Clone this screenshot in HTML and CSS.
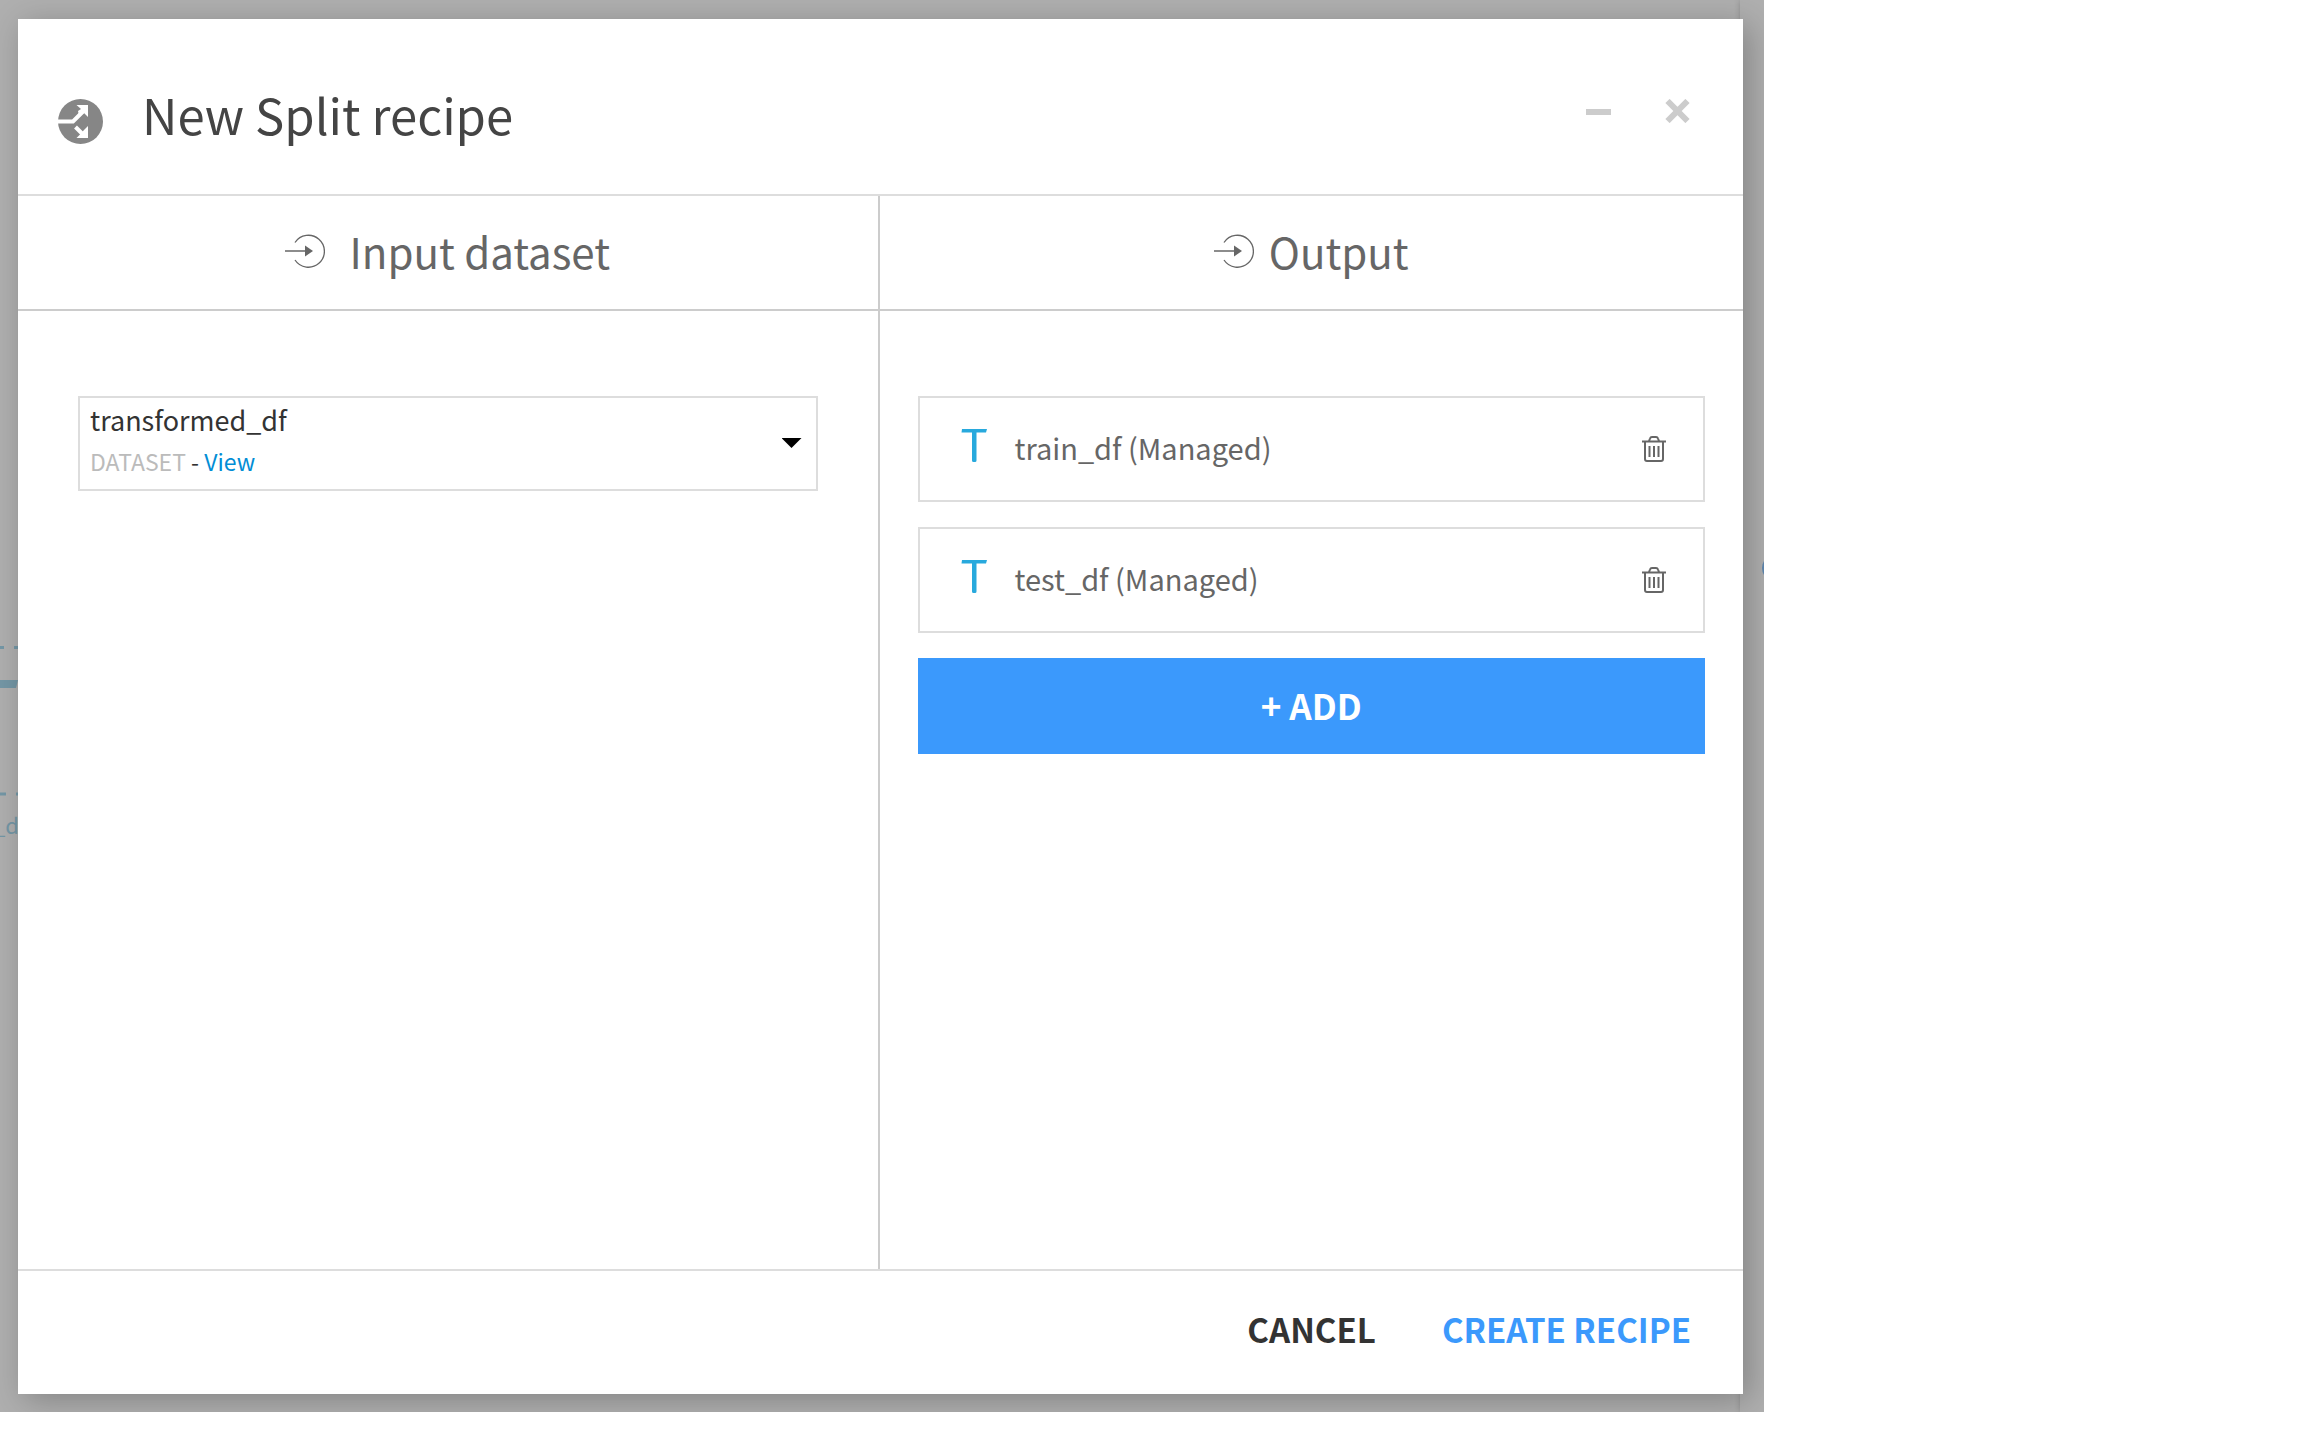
FILE: index.html
```html
<!DOCTYPE html>
<html lang="en">
<head>
<meta charset="utf-8">
<meta name="viewport" content="width=device-width, initial-scale=1">
<title>New Split recipe</title>
<link rel="stylesheet" href="styles.css">
</head>
<body>
<svg class="sprite" aria-hidden="true">
  <symbol id="io" viewBox="0 0 40 34">
    <path d="M10 8.500A16 16 0 1 1 10 26" fill="none" stroke="currentColor" stroke-width="1.300"/>
    <path d="M0 17h21" stroke="currentColor" stroke-width="1.500"/>
    <path d="M20 11.500l8 5.500-8 5.500z" fill="currentColor"/>
  </symbol>
  <symbol id="tee" viewBox="0 0 26 34">
    <path d="M1 0h25l-1 3.500h-9.500v28q0 1.500-1.500 1.500h-1.500q-1.500 0-1.500-1.500v-28H.500z" fill="currentColor"/>
  </symbol>
  <symbol id="trash" viewBox="0 0 24 26">
    <path d="M0 5.500h24M7 5l1-2.500q.500-1.500 2-1.500h4q1.500 0 2 1.500L17 5M3 5.500V23q0 2 2 2h14q2 0 2-2V5.500M7.500 10v11M12 10v11M16.500 10v11" fill="none" stroke="currentColor" stroke-width="2"/>
  </symbol>
</svg>
<div class="backdrop">
  <div class="flow" aria-hidden="true">
    <svg class="flow-links" viewBox="0 0 18 160">
      <path d="M0 1.500h4M14 1.500h4M0 148h6M16 148h2" stroke="#7497a6" stroke-width="3" fill="none"/>
      <path d="M0 34h18l-2 8H0z" fill="#7497a6"/>
    </svg>
    <span class="flow-label">_d</span>
    <span class="flow-node"></span>
    <span class="flow-panel"></span>
  </div>
  <section class="modal" role="dialog" aria-labelledby="title">
    <header class="modal-head">
      <svg class="split-icon" viewBox="0 0 45 45" aria-hidden="true">
        <circle cx="22.500" cy="22.500" r="22.500" fill="#868686"/>
        <path d="M0 22.500h15L25.500 12" fill="none" stroke="#fff" stroke-width="4"/>
        <path d="M18.500 6H30v12l-4-4-5 2.500-1-4.500 3-2z" fill="#fff"/>
        <path d="M17.500 28l7 7" stroke="#fff" stroke-width="4"/>
        <path d="M30 27v12H18.500l4-4 3.500-4z" fill="#fff"/>
      </svg>
      <h1 id="title">New Split recipe</h1>
      <div class="window-actions">
        <button type="button" aria-label="Minimize"><svg viewBox="0 0 25 24"><path d="M0 13h25" stroke="currentColor" stroke-width="6"/></svg></button>
        <button type="button" aria-label="Close"><svg viewBox="0 0 25 24"><path d="M2.500 2l20 20M22.500 2l-20 20" stroke="currentColor" stroke-width="6"/></svg></button>
      </div>
    </header>
    <div class="columns">
      <section class="column">
        <h2 class="wide"><svg class="io" aria-hidden="true"><use href="#io"/></svg>Input dataset</h2>
        <div class="input-body">
          <div class="picker">
            <select aria-label="Input dataset"><option>transformed_df</option></select>
            <p class="picker-note"><span>DATASET</span> - <a href="#view">View</a></p>
            <i class="caret"></i>
          </div>
        </div>
      </section>
      <section class="column">
        <h2><svg class="io" aria-hidden="true"><use href="#io"/></svg>Output</h2>
        <div class="output-body">
          <div class="output">
            <svg class="tee" aria-hidden="true"><use href="#tee"/></svg>
            <span class="output-name">train_df (Managed)</span>
            <button type="button" aria-label="Delete train_df"><svg class="trash"><use href="#trash"/></svg></button>
          </div>
          <div class="output">
            <svg class="tee" aria-hidden="true"><use href="#tee"/></svg>
            <span class="output-name">test_df (Managed)</span>
            <button type="button" aria-label="Delete test_df"><svg class="trash"><use href="#trash"/></svg></button>
          </div>
          <button type="button" class="add">+ ADD</button>
        </div>
      </section>
    </div>
    <footer class="modal-foot">
      <button type="button">CANCEL</button>
      <button type="button" class="primary">CREATE RECIPE</button>
    </footer>
  </section>
</div>
</body>
</html>
```
FILE: styles.css
```css
* { box-sizing: border-box; }
body {
  margin: 0;
  background: #fff;
  color: #333;
  font-family: "Noto Sans CJK SC", "Noto Sans", sans-serif;
}
h1, h2, p { margin: 0; font-weight: 400; }
button {
  border: 0;
  padding: 0;
  background: none;
  color: inherit;
  font: inherit;
  cursor: pointer;
}
svg { display: block; flex: none; }
.sprite { position: absolute; width: 0; height: 0; }

.backdrop {
  position: relative;
  display: flex;
  width: 76.5625%;
  min-height: calc(100vh - 28px);
  padding: 19px 21px 18px 18px;
  background: #afafaf;
  overflow: hidden;
}
.flow-links { position: absolute; left: 0; top: 646px; width: 18px; height: 160px; }
.flow-label {
  position: absolute;
  left: -7px;
  top: 808px;
  font-size: 22px;
  line-height: 32px;
  color: #7497a6;
}
.flow-node {
  position: absolute;
  right: -24px;
  top: 555px;
  width: 26px;
  height: 26px;
  border-radius: 50%;
  background: #5f87b0;
}
.flow-panel {
  position: absolute;
  right: 0;
  top: 0;
  bottom: 0;
  width: 24px;
  box-shadow: 0 0 6px rgba(0, 0, 0, .2);
}

.modal {
  position: relative;
  display: flex;
  flex: 1;
  flex-direction: column;
  background: #fff;
  box-shadow: 6px 6px 30px rgba(0, 0, 0, .25);
}
.modal-head {
  display: flex;
  align-items: center;
  height: 177px;
  padding: 14px 53px 0 40px;
  border-bottom: 2px solid #ddd;
}
.split-icon { width: 45px; height: 45px; margin-top: 16px; }
h1 { margin-left: 39px; font-size: 49px; line-height: 72px; color: #444; }
.window-actions { display: flex; gap: 54px; margin-left: auto; color: #ccc; }
.window-actions svg { width: 25px; height: 24px; margin-bottom: 6px; }

.columns { display: grid; flex: 1; grid-template-columns: calc(50% - 3px) 1fr; }
.column + .column { border-left: 2px solid #ccc; }
h2 {
  display: flex;
  align-items: center;
  justify-content: center;
  gap: 15px;
  height: 115px;
  padding-bottom: 4px;
  border-bottom: 2px solid #ccc;
  font-size: 42px;
  line-height: 60px;
  color: #666;
}
h2.wide { gap: 24px; }
.io { width: 40px; height: 34px; }
.input-body { padding: 85px 60px 40px; }
.output-body {
  display: flex;
  flex-direction: column;
  gap: 25px;
  padding: 85px 38px 40px;
}

.picker { position: relative; }
select {
  display: block;
  width: 100%;
  height: 95px;
  padding: 0 48px 48px 10px;
  border: 2px solid #ddd;
  border-radius: 0;
  appearance: none;
  background: #fff;
  color: #333;
  font: inherit;
  font-size: 27px;
  line-height: 40px;
}
.picker-note {
  position: absolute;
  left: 12px;
  top: 48px;
  font-size: 23px;
  line-height: 34px;
}
.picker-note span { color: #bbb; }
.picker-note a { color: #028dd5; text-decoration: none; }
.caret {
  position: absolute;
  right: 16px;
  top: 42px;
  width: 20px;
  height: 10px;
  background: #000;
  clip-path: polygon(0 0, 100% 0, 50% 100%);
  pointer-events: none;
}

.output {
  display: flex;
  align-items: center;
  height: 106px;
  padding: 0 37px 4px 41px;
  border: 2px solid #ddd;
  color: #666;
}
.tee { width: 26px; height: 34px; margin-bottom: 2px; color: #28a9dd; }
.output-name { flex: 1; margin-left: 28px; font-size: 29px; line-height: 44px; }
.trash { width: 24px; height: 26px; margin-top: 4px; }
.add {
  height: 96px;
  padding-bottom: 2px;
  background: #3b99fc;
  color: #fff;
  font-size: 35px;
  line-height: 50px;
  font-weight: 700;
}

.modal-foot {
  display: flex;
  align-items: center;
  justify-content: flex-end;
  gap: 66px;
  height: 125px;
  padding: 0 52px 8px;
  border-top: 2px solid #ddd;
  font-size: 33px;
  line-height: 48px;
  font-weight: 600;
}
.primary { color: #3b99fc; }
```
